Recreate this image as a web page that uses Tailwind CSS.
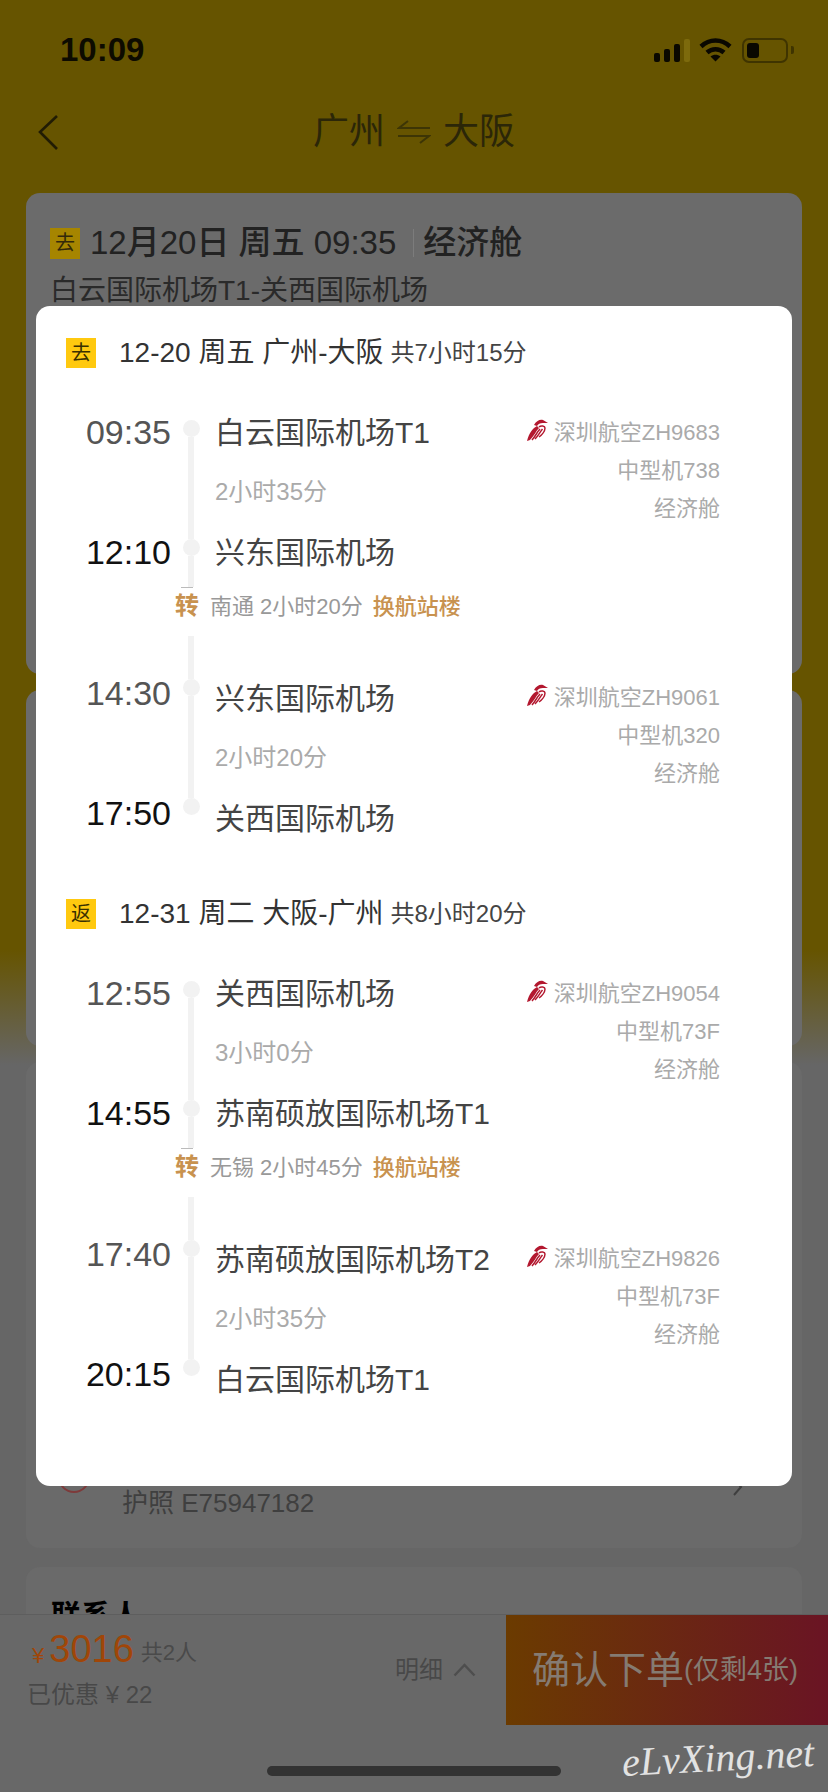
<!DOCTYPE html>
<html lang="zh-CN">
  <head>
    <meta charset="UTF-8" />
    <meta name="viewport" content="width=device-width, initial-scale=1.0" />
    <script src="https://cdn.jsdelivr.net/npm/@tailwindcss/browser@4"></script>
    <title>广州 大阪 订单确认</title>
  </head>
  <body class="bg-[#666666]">
    <div class="relative w-[828px] h-[1792px] overflow-hidden flex flex-col bg-[linear-gradient(#665400_0,#665400_950px,#666666_1065px)] font-['Liberation_Sans','Noto_Sans_CJK_SC',sans-serif]">
      <!-- status bar -->
      <div class="h-[100px] shrink-0 flex items-center pl-[60px] pr-[34px]">
        <span class="text-[33px] font-bold text-[#0d0b00]">10:09</span>
        <div class="ml-auto flex items-center">
          <div class="flex items-end gap-[4px] h-[23px]">
            <div class="w-[6px] h-[9px] rounded-[2px] bg-[#0a0800]"></div>
            <div class="w-[6px] h-[13px] rounded-[2px] bg-[#0a0800]"></div>
            <div class="w-[6px] h-[18px] rounded-[2px] bg-[#0a0800]"></div>
            <div class="w-[6px] h-[23px] rounded-[2px] bg-[#7d6a0c]"></div>
          </div>
          <svg class="ml-[9px]" width="33" height="24" viewBox="0 0 33 24" fill="none" stroke="#0a0800" stroke-width="4.5">
            <path d="M2 8.5C10.5 .5 22.5 .5 31 8.5" />
            <path d="M8 14.5C13 10 20 10 25 14.5" />
            <path d="M16.5 23.5L11.5 18.5C14.5 16.2 18.5 16.2 21.5 18.5Z" fill="#0a0800" stroke="none" />
          </svg>
          <div class="ml-[10px] w-[46px] h-[25px] rounded-[7px] border-2 border-[#3f3400] p-[3px]">
            <div class="w-[12px] h-full rounded-[3px] bg-[#0a0800]"></div>
          </div>
          <div class="ml-[3px] w-[3px] h-[8px] rounded-r-[2px] bg-[#3f3400]"></div>
        </div>
      </div>

      <!-- nav -->
      <div class="relative h-[64px] shrink-0 flex items-center justify-center text-[36px] text-[#2b2608]">
        <svg class="absolute left-[37px] top-[14px]" width="22" height="36" viewBox="0 0 22 36" fill="none" stroke="#211c04" stroke-width="2.6">
          <path d="M20 2L3 18L20 35" />
        </svg>
        <span>广州</span>
        <svg class="mx-[12px]" width="34" height="24" viewBox="0 0 34 24" fill="none" stroke="#3d3505" stroke-width="2">
          <path d="M33 8H2L11 1" />
          <path d="M1 16H32L23 23" />
        </svg>
        <span>大阪</span>
      </div>

      <!-- page behind the dialog -->
      <div class="px-[26px] pt-[29px] flex flex-col gap-[16px]">
        <div class="h-[481px] rounded-[14px] bg-[#6b6b6b] px-[24px] pt-[34px]">
          <div class="flex items-center h-[32px] text-[33px] font-medium text-[#222222]">
            <span class="w-[30px] h-[31px] mr-[10px] flex items-center justify-center bg-[#a68500] text-[20px] font-normal text-[#33290a]">去</span>
            <span>12月20日 周五 09:35</span>
            <span class="ml-[17px] mr-[9px] w-px h-[28px] bg-[#7c7c7c]"></span>
            <span>经济舱</span>
          </div>
          <div class="mt-[14px] text-[28px] leading-[36px] text-[#2a2a2a]">白云国际机场T1-关西国际机场</div>
        </div>
        <div class="h-[356px] rounded-[14px] bg-[#6b6b6b]"></div>
        <div class="h-[486px] rounded-[14px] bg-[#6a6a6a] pl-[96px] pr-[54px] pb-[28px] flex items-end justify-between">
          <span class="text-[26px] leading-[34px] text-[#3f3f3f]">护照 E75947182</span>
        </div>
        <div class="mt-[3px] h-[47px] overflow-hidden rounded-t-[14px] bg-[#6a6a6a] px-[25px] pt-[26px] text-[30px] font-bold text-black">联系人</div>
      </div>

      <!-- selected-passenger check, mostly hidden by the dialog -->
      <div class="absolute left-[58px] top-[1461px] w-[32px] h-[32px] rounded-full border-2 border-[#7e3a3a]"></div>
      <svg class="absolute left-[733px] top-[1478px]" width="10" height="18" viewBox="0 0 10 18" fill="none" stroke="#3f3f3f" stroke-width="2">
        <path d="M1 1L8 9L1 17" />
      </svg>

      <!-- bottom bar -->
      <div class="absolute left-0 right-0 top-[1614px] h-[178px] bg-[#686868] border-t border-[#5e5e5e]">
        <div class="flex h-[110px]">
          <div class="w-[365px] pl-[27px] pt-[12px]">
            <div class="flex items-end h-[44px] pl-[5px]">
              <span class="text-[22px] leading-[30px] text-[#a04608]">¥</span>
              <span class="ml-[5px] text-[38px] leading-[44px] text-[#a04608]">3016</span>
              <span class="ml-[7px] text-[22px] leading-[36px] text-[#4a4a4a]">共2人</span>
            </div>
            <div class="mt-[8px] text-[24px] leading-[32px] text-[#484848]">已优惠 ¥ 22</div>
          </div>
          <div class="w-[141px] pl-[30px] flex items-center text-[24px] text-[#484848]">
            <span>明细</span>
            <svg class="ml-[10px]" width="23" height="14" viewBox="0 0 23 14" fill="none" stroke="#4e4e4e" stroke-width="2.5">
              <path d="M1.5 12.5L11.5 2L21.5 12.5" />
            </svg>
          </div>
          <div class="flex-1 flex items-center pl-[26px] bg-[linear-gradient(90deg,#6b3b00,#6a1424)] text-[#857b72]">
            <span class="text-[38px]">确认下单</span>
            <span class="text-[27px]">(仅剩4张)</span>
          </div>
        </div>
      </div>

      <!-- home indicator and watermark -->
      <div class="absolute left-[267px] top-[1766px] w-[294px] h-[10px] rounded-full bg-[#333333]"></div>
      <div class="absolute left-[622px] top-[1733px] -rotate-3 font-['Liberation_Serif',serif] italic text-[40px] leading-[50px] text-[#e2e2e2]">eLvXing.net</div>

      <!-- dialog -->
      <div class="absolute left-[36px] top-[306px] w-[756px] h-[1180px] rounded-[14px] bg-white pl-[30px] pr-[72px] pt-[32px]">
        <!-- outbound -->
        <div class="flex items-center h-[30px]">
          <span class="w-[30px] h-[30px] flex items-center justify-center bg-[#ffc90f] text-[20px] text-[#3a3000]">去</span>
          <span class="ml-[23px] text-[28px] text-[#333333]">12-20 周五 广州-大阪</span>
          <span class="ml-[7px] text-[24px] text-[#444444]">共7小时15分</span>
        </div>

        <div class="mt-[34px] flex">
          <div class="w-[105px] flex flex-col text-right text-[34px] leading-[60px]">
            <div class="h-[60px] text-[#555555]">09:35</div>
            <div class="h-[60px]"></div>
            <div class="h-[60px] text-[#111111]">12:10</div>
          </div>
          <div class="w-[40px] h-[185px] flex flex-col items-center pt-[18px]">
            <div class="w-[17px] h-[17px] shrink-0 rounded-full bg-[#f2f2f2]"></div>
            <div class="w-[6px] h-[102px] shrink-0 bg-[#f2f2f2]"></div>
            <div class="w-[17px] h-[17px] shrink-0 rounded-full bg-[#f2f2f2]"></div>
            <div class="w-[6px] h-[31px] shrink-0 bg-[#f2f2f2]"></div>
            <div class="w-[12px] h-px shrink-0 ml-[-8px] bg-[#bbbbbb]"></div>
          </div>
          <div class="ml-[4px] text-[#444444]">
            <div class="h-[60px] flex items-center text-[30px]">白云国际机场T1</div>
            <div class="h-[60px] flex items-center text-[24px] text-[#aaaaaa]">2小时35分</div>
            <div class="h-[60px] flex items-center text-[30px]">兴东国际机场</div>
          </div>
          <div class="ml-auto pt-[12px] flex flex-col items-end text-[22px] leading-[38px] text-[#aaaaaa]">
            <div class="flex items-center">
              <svg class="mr-[4px] mb-[6px]" width="24" height="24" viewBox="0 0 24 24" fill="none" stroke="#b3182f" stroke-width="1.5">
                <path d="M1 23C3 15 7 10 11 8L13 10C10 13 8 18 4 22Z" fill="#b3182f" stroke="none" />
                <path d="M8 7C10 3 14 1 17 2L22 5L17 5C14 5 12 6 11 8Z" fill="#b3182f" stroke="none" />
                <path d="M6 22C9 19 11 14 14 11" />
                <path d="M9 21C12 18 14 14 16.5 11" />
                <path d="M13 9C15 7 19 8 19 10C19 13 16 17 13 19" />
              </svg>
              <span>深圳航空ZH9683</span>
            </div>
            <div>中型机738</div>
            <div>经济舱</div>
          </div>
        </div>

        <div class="mt-[7px] h-[24px] pl-[109px] flex items-center text-[22px] text-[#999999]">
          <span class="text-[24px] font-bold text-[#c8924f]">转</span>
          <span class="ml-[11px]">南通 2小时20分</span>
          <span class="ml-[10px] font-medium text-[#c8924f]">换航站楼</span>
        </div>

        <div class="mt-[50px] flex">
          <div class="w-[105px] flex flex-col text-right text-[34px] leading-[60px]">
            <div class="h-[60px] -mt-[5px] text-[#555555]">14:30</div>
            <div class="h-[60px] shrink-0"></div>
            <div class="h-[60px] text-[#111111]">17:50</div>
          </div>
          <div class="w-[40px] h-[180px] flex flex-col items-center -mt-[32px]">
            <div class="w-[6px] h-[43px] shrink-0 bg-[#f2f2f2]"></div>
            <div class="w-[17px] h-[17px] shrink-0 rounded-full bg-[#f2f2f2]"></div>
            <div class="w-[6px] h-[102px] shrink-0 bg-[#f2f2f2]"></div>
            <div class="w-[17px] h-[17px] shrink-0 rounded-full bg-[#f2f2f2]"></div>
          </div>
          <div class="ml-[4px] text-[#444444]">
            <div class="h-[60px] flex items-center text-[30px]">兴东国际机场</div>
            <div class="h-[60px] flex items-center text-[24px] text-[#aaaaaa]">2小时20分</div>
            <div class="h-[60px] flex items-center text-[30px]">关西国际机场</div>
          </div>
          <div class="ml-auto pt-[11px] flex flex-col items-end text-[22px] leading-[38px] text-[#aaaaaa]">
            <div class="flex items-center">
              <svg class="mr-[4px] mb-[6px]" width="24" height="24" viewBox="0 0 24 24" fill="none" stroke="#b3182f" stroke-width="1.5">
                <path d="M1 23C3 15 7 10 11 8L13 10C10 13 8 18 4 22Z" fill="#b3182f" stroke="none" />
                <path d="M8 7C10 3 14 1 17 2L22 5L17 5C14 5 12 6 11 8Z" fill="#b3182f" stroke="none" />
                <path d="M6 22C9 19 11 14 14 11" />
                <path d="M9 21C12 18 14 14 16.5 11" />
                <path d="M13 9C15 7 19 8 19 10C19 13 16 17 13 19" />
              </svg>
              <span>深圳航空ZH9061</span>
            </div>
            <div>中型机320</div>
            <div>经济舱</div>
          </div>
        </div>

        <!-- return -->
        <div class="mt-[51px] flex items-center h-[30px]">
          <span class="w-[30px] h-[30px] flex items-center justify-center bg-[#ffc90f] text-[20px] text-[#3a3000]">返</span>
          <span class="ml-[23px] text-[28px] text-[#333333]">12-31 周二 大阪-广州</span>
          <span class="ml-[7px] text-[24px] text-[#444444]">共8小时20分</span>
        </div>

        <div class="mt-[34px] flex">
          <div class="w-[105px] flex flex-col text-right text-[34px] leading-[60px]">
            <div class="h-[60px] text-[#555555]">12:55</div>
            <div class="h-[60px]"></div>
            <div class="h-[60px] text-[#111111]">14:55</div>
          </div>
          <div class="w-[40px] h-[185px] flex flex-col items-center pt-[18px]">
            <div class="w-[17px] h-[17px] shrink-0 rounded-full bg-[#f2f2f2]"></div>
            <div class="w-[6px] h-[102px] shrink-0 bg-[#f2f2f2]"></div>
            <div class="w-[17px] h-[17px] shrink-0 rounded-full bg-[#f2f2f2]"></div>
            <div class="w-[6px] h-[31px] shrink-0 bg-[#f2f2f2]"></div>
            <div class="w-[12px] h-px shrink-0 ml-[-8px] bg-[#bbbbbb]"></div>
          </div>
          <div class="ml-[4px] text-[#444444]">
            <div class="h-[60px] flex items-center text-[30px]">关西国际机场</div>
            <div class="h-[60px] flex items-center text-[24px] text-[#aaaaaa]">3小时0分</div>
            <div class="h-[60px] flex items-center text-[30px]">苏南硕放国际机场T1</div>
          </div>
          <div class="ml-auto pt-[12px] flex flex-col items-end text-[22px] leading-[38px] text-[#aaaaaa]">
            <div class="flex items-center">
              <svg class="mr-[4px] mb-[6px]" width="24" height="24" viewBox="0 0 24 24" fill="none" stroke="#b3182f" stroke-width="1.5">
                <path d="M1 23C3 15 7 10 11 8L13 10C10 13 8 18 4 22Z" fill="#b3182f" stroke="none" />
                <path d="M8 7C10 3 14 1 17 2L22 5L17 5C14 5 12 6 11 8Z" fill="#b3182f" stroke="none" />
                <path d="M6 22C9 19 11 14 14 11" />
                <path d="M9 21C12 18 14 14 16.5 11" />
                <path d="M13 9C15 7 19 8 19 10C19 13 16 17 13 19" />
              </svg>
              <span>深圳航空ZH9054</span>
            </div>
            <div>中型机73F</div>
            <div>经济舱</div>
          </div>
        </div>

        <div class="mt-[7px] h-[24px] pl-[109px] flex items-center text-[22px] text-[#999999]">
          <span class="text-[24px] font-bold text-[#c8924f]">转</span>
          <span class="ml-[11px]">无锡 2小时45分</span>
          <span class="ml-[10px] font-medium text-[#c8924f]">换航站楼</span>
        </div>

        <div class="mt-[50px] flex">
          <div class="w-[105px] flex flex-col text-right text-[34px] leading-[60px]">
            <div class="h-[60px] -mt-[5px] text-[#555555]">17:40</div>
            <div class="h-[60px] shrink-0"></div>
            <div class="h-[60px] text-[#111111]">20:15</div>
          </div>
          <div class="w-[40px] h-[180px] flex flex-col items-center -mt-[32px]">
            <div class="w-[6px] h-[43px] shrink-0 bg-[#f2f2f2]"></div>
            <div class="w-[17px] h-[17px] shrink-0 rounded-full bg-[#f2f2f2]"></div>
            <div class="w-[6px] h-[102px] shrink-0 bg-[#f2f2f2]"></div>
            <div class="w-[17px] h-[17px] shrink-0 rounded-full bg-[#f2f2f2]"></div>
          </div>
          <div class="ml-[4px] text-[#444444]">
            <div class="h-[60px] flex items-center text-[30px]">苏南硕放国际机场T2</div>
            <div class="h-[60px] flex items-center text-[24px] text-[#aaaaaa]">2小时35分</div>
            <div class="h-[60px] flex items-center text-[30px]">白云国际机场T1</div>
          </div>
          <div class="ml-auto pt-[11px] flex flex-col items-end text-[22px] leading-[38px] text-[#aaaaaa]">
            <div class="flex items-center">
              <svg class="mr-[4px] mb-[6px]" width="24" height="24" viewBox="0 0 24 24" fill="none" stroke="#b3182f" stroke-width="1.5">
                <path d="M1 23C3 15 7 10 11 8L13 10C10 13 8 18 4 22Z" fill="#b3182f" stroke="none" />
                <path d="M8 7C10 3 14 1 17 2L22 5L17 5C14 5 12 6 11 8Z" fill="#b3182f" stroke="none" />
                <path d="M6 22C9 19 11 14 14 11" />
                <path d="M9 21C12 18 14 14 16.5 11" />
                <path d="M13 9C15 7 19 8 19 10C19 13 16 17 13 19" />
              </svg>
              <span>深圳航空ZH9826</span>
            </div>
            <div>中型机73F</div>
            <div>经济舱</div>
          </div>
        </div>
      </div>
    </div>
  </body>
</html>
